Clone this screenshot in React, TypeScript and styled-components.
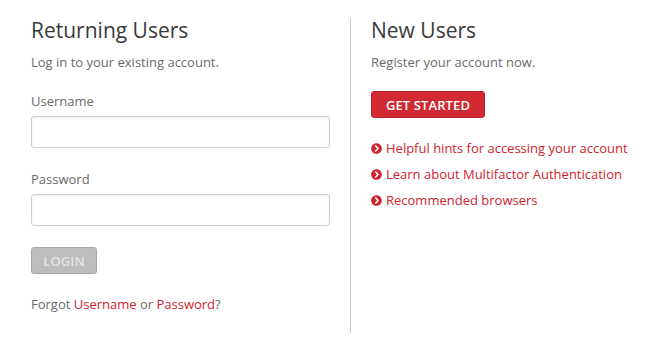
import React, { FC } from 'react';
import styled, { createGlobalStyle } from 'styled-components';
import { FaChevronCircleRight } from 'react-icons/fa';

const GlobalStyle = createGlobalStyle`
  html, body {
    margin: 0;
    padding: 0;
    background: #fff;
  }
  body {
    font-family: 'Open Sans', 'Liberation Sans', Arial, sans-serif;
    color: #666;
  }
`;

const RED = '#d0232f';

const Page = styled.div`
  display: flex;
  padding: 18px 0 0 31px;
  width: 649px;
  height: 352px;
  box-sizing: border-box;
`;

const Column = styled.section<{ $divider?: boolean }>`
  box-sizing: border-box;
  height: 315px;
  ${({ $divider }) =>
    $divider
      ? `
    border-left: 1px solid #c8c8c8;
    padding-left: 20px;
    flex: 1;
  `
      : `
    width: 319px;
    padding-right: 20px;
  `}
`;

const Heading = styled.h2`
  margin: 0;
  font-size: 21px;
  line-height: 24px;
  font-weight: 400;
  color: #3a3a3a;
`;

const Lead = styled.p`
  margin: 11px 0 0;
  font-size: 13px;
  line-height: 18px;
  color: #6b6b6b;
`;

const Field = styled.label`
  display: block;
  margin-top: 21px;
  font-size: 13px;
  line-height: 18px;
  color: #6b6b6b;

  & + & {
    margin-top: 22px;
  }
`;

const Input = styled.input`
  display: block;
  box-sizing: border-box;
  width: 100%;
  height: 32px;
  margin-top: 6px;
  border: 1px solid #cfcfcf;
  border-radius: 3px;
  box-shadow: inset 0 1px 2px rgba(0, 0, 0, 0.08);
  background: #fff;
  font-family: inherit;
  outline: none;
`;

const Button = styled.button<{ $primary?: boolean }>`
  display: block;
  box-sizing: border-box;
  height: 27px;
  padding: 0;
  border-radius: 3px;
  font-family: inherit;
  font-size: 13px;
  font-weight: 600;
  letter-spacing: 0.1px;
  text-transform: uppercase;
  cursor: pointer;
  border: 1px solid ${({ $primary }) => ($primary ? '#c0222c' : '#a9a9a9')};
  background: ${({ $primary }) => ($primary ? '#d12a33' : '#bdbdbd')};
  color: ${({ $primary }) => ($primary ? '#fff' : '#e2e2e2')};
`;

const LoginButton = styled(Button)`
  margin-top: 21px;
  width: 66px;
`;

const StartButton = styled(Button)`
  margin-top: 20px;
  width: 114px;
`;

const Forgot = styled.p`
  margin: 21px 0 0;
  font-size: 13px;
  line-height: 18px;
  color: #6b6b6b;
`;

const Link = styled.a`
  color: ${RED};
  text-decoration: none;
`;

const LinkList = styled.ul`
  list-style: none;
  margin: 21px 0 0;
  padding: 0;
  display: flex;
  flex-direction: column;
  gap: 8px;
`;

const LinkItem = styled.li`
  display: flex;
  align-items: center;
  gap: 4px;
  font-size: 13px;
  line-height: 18px;
  color: ${RED};

  svg {
    flex: none;
    width: 11px;
    height: 11px;
  }
`;

const helpLinks = [
  'Helpful hints for accessing your account',
  'Learn about Multifactor Authentication',
  'Recommended browsers',
];

const App: FC = () => (
  <>
    <GlobalStyle />
    <Page>
      <Column>
        <Heading>Returning Users</Heading>
        <Lead>Log in to your existing account.</Lead>
        <Field>
          Username
          <Input type="text" />
        </Field>
        <Field>
          Password
          <Input type="password" />
        </Field>
        <LoginButton disabled>Login</LoginButton>
        <Forgot>
          Forgot <Link href="#">Username</Link> or <Link href="#">Password</Link>?
        </Forgot>
      </Column>
      <Column $divider>
        <Heading>New Users</Heading>
        <Lead>Register your account now.</Lead>
        <StartButton $primary>Get Started</StartButton>
        <LinkList>
          {helpLinks.map((t) => (
            <LinkItem key={t}>
              <FaChevronCircleRight />
              <Link href="#">{t}</Link>
            </LinkItem>
          ))}
        </LinkList>
      </Column>
    </Page>
  </>
);

export default App;
